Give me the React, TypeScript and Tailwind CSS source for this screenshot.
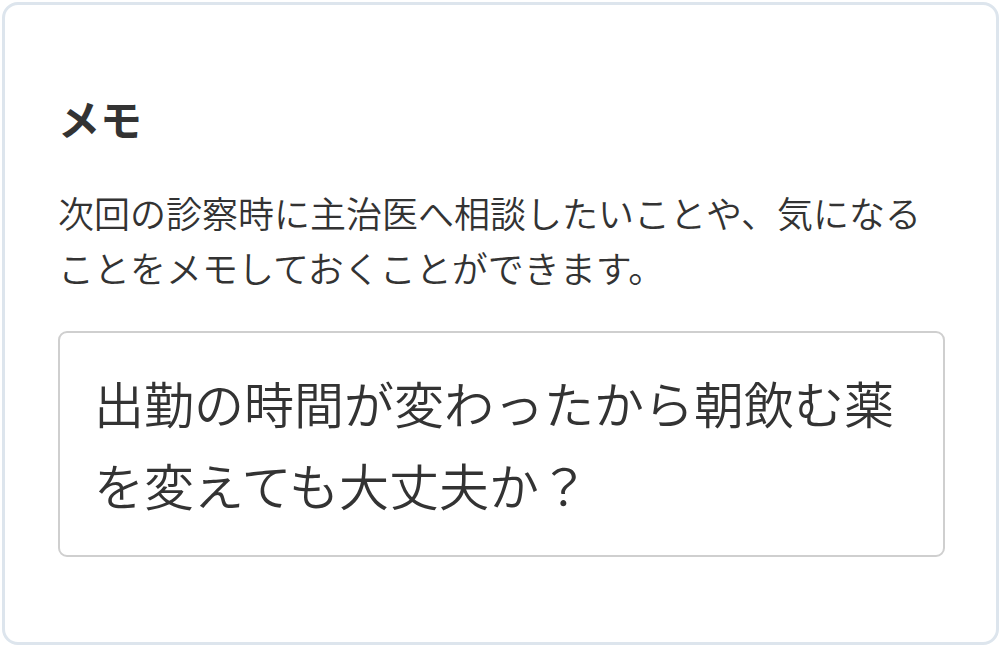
export default function App() {
  return (
    <div className="w-[1001px] h-[647px] bg-white p-[2px]" style={{ fontFamily: '"Noto Sans CJK JP", "Noto Sans", sans-serif' }}>
      <div className="h-full rounded-[16px] border-[3px] border-[#dde5ed] bg-white pl-[53px] pr-[51px] pt-[92px]">
        <h2 className="text-[42px] leading-[42px] font-bold text-[#333]">メモ</h2>

        <p className="mt-[46px] text-[36px] leading-[55px] font-[350] text-[#333]">
          次回の診察時に主治医へ相談したいことや、気になる
          <br />
          ことをメモしておくことができます。
        </p>

        <div className="mt-[36px] h-[226px] rounded-[9px] border-2 border-[#cfcfcf] px-[34px] pt-[28px] text-[50px] leading-[82px] font-[350] text-[#333]">
          出勤の時間が変わったから朝飲む薬
          <br />
          を変えても大丈夫か？
        </div>
      </div>
    </div>
  );
}
